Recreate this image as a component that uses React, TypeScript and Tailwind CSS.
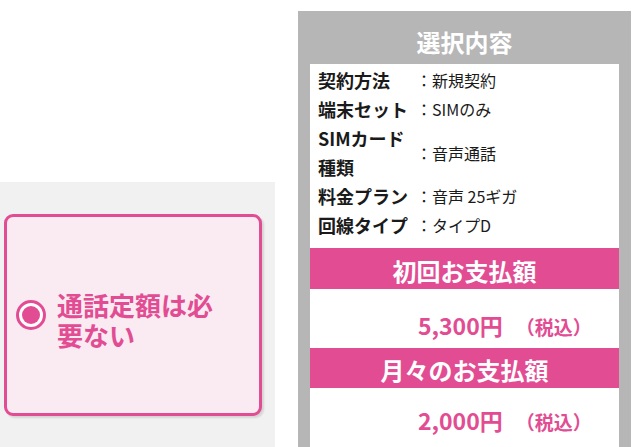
const pink = 'text-[#e24c93]';

const rows: { label: string; value: string }[] = [
  { label: '契約方法', value: '新規契約' },
  { label: '端末セット', value: 'SIMのみ' },
  { label: 'SIMカード種類', value: '音声通話' },
  { label: '料金プラン', value: '音声 25ギガ' },
  { label: '回線タイプ', value: 'タイプD' },
];

function Radio() {
  return (
    <div className="w-[30px] h-[30px] shrink-0 rounded-full border-[3px] border-[#e24c93] bg-white flex items-center justify-center">
      <div className="w-[18px] h-[18px] rounded-full bg-[#e24c93]" />
    </div>
  );
}

function Amount({ value, top }: { value: string; top: string }) {
  return (
    <div className={`bg-white pl-[108px] ${top}`}>
      <span className={`${pink} font-bold text-[23px] leading-[30px]`}>{value}</span>
      <span className={`${pink} font-bold text-[19px] leading-[30px] ml-[13px]`}>（税込）</span>
    </div>
  );
}

export default function App() {
  return (
    <div
      className="w-[641px] h-[447px] overflow-hidden bg-white flex"
      style={{ fontFamily: '"Noto Sans CJK JP", "Noto Sans", sans-serif' }}
    >
      <div className="w-[275px] shrink-0 flex flex-col">
        <div className="h-[182px] bg-white" />
        <div className="flex-1 bg-[#f1f1f1] pt-[32px] pl-[4px]">
          <div className="w-[258px] h-[202px] rounded-[9px] border-[3px] border-[#e24c93] bg-[#faeaf2] shadow-[2px_2px_2px_rgba(0,0,0,0.12)] flex items-center pl-[9px]">
            <Radio />
            <div className={`ml-[11px] mt-[10px] w-[170px] ${pink} font-bold text-[26px] leading-[30px]`}>
              通話定額は必要ない
            </div>
          </div>
        </div>
      </div>

      <div className="ml-[23px] mt-[11px] w-[333px] shrink-0 bg-[#b6b6b6] px-[12px] flex flex-col">
        <div className="h-[53px] pt-[13px] text-center text-white font-bold text-[24px] leading-[36px]">選択内容</div>

        <div className="bg-white pt-[2px] pb-[8px] pl-[8px]">
          {rows.map((r) => (
            <div key={r.label} className="flex items-center">
              <div className="w-[98px] shrink-0 text-[18px] font-bold leading-[29px] text-[#1a1a1a]">
                {r.label === 'SIMカード種類' ? (
                  <>
                    SIMカード
                    <br />
                    種類
                  </>
                ) : (
                  r.label
                )}
              </div>
              <div className="text-[16px] leading-[29px] text-[#1a1a1a]">：{r.value}</div>
            </div>
          ))}
        </div>

        <div className="h-[41px] bg-[#e24c93] text-center text-white font-bold text-[24px] leading-[41px] pt-[2px]">初回お支払額</div>
        <div className="h-[59px] bg-white">
          <Amount value="5,300円" top="pt-[21px]" />
        </div>

        <div className="h-[40px] bg-[#e24c93] text-center text-white font-bold text-[24px] leading-[40px] pt-[2px]">月々のお支払額</div>
        <div className="flex-1 bg-white">
          <Amount value="2,000円" top="pt-[17px]" />
        </div>
      </div>
    </div>
  );
}
